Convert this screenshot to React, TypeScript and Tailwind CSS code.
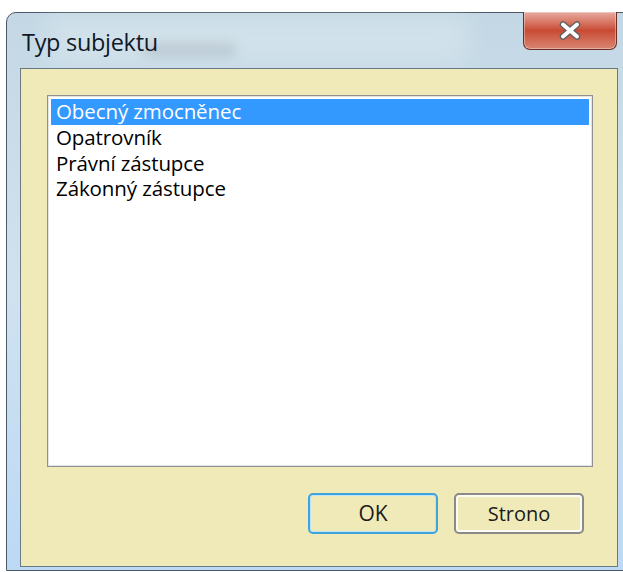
const items = ["Obecný zmocněnec", "Opatrovník", "Právní zástupce", "Zákonný zástupce"];

const uiFont = { fontFamily: '"Open Sans", "Noto Sans", "DejaVu Sans", sans-serif' };

const CloseButton = () => (
  <div className="w-[94px] h-[38px] rounded-b-[7px] border border-t-0 border-[#6b2f25] bg-gradient-to-b from-[#e6aa9f] via-[#c84a33] to-[#d88572] flex items-center justify-center shadow-[inset_0_0_0_1px_rgba(255,255,255,0.35)]">
    <svg width="24" height="19" viewBox="0 0 24 19">
      <path d="M5 3.5 L19 15.5 M19 3.5 L5 15.5" stroke="#5f5f5f" strokeWidth="6.5" strokeLinecap="round" />
      <path d="M5 3.5 L19 15.5 M19 3.5 L5 15.5" stroke="#ffffff" strokeWidth="4" strokeLinecap="round" />
    </svg>
  </div>
);

export default function App() {
  return (
    <div className="w-[623px] h-[572px] bg-white overflow-hidden pt-[12px] pl-[6px]" style={uiFont}>
      <div className="relative w-[630px] h-[559px] rounded-tl-[10px] border border-[#4d5866] bg-gradient-to-b from-[#c3d8e4] via-[#cfe2f0] to-[#bcd9f5] pl-[13px]">
        {/* blurred glass smudge behind the caption */}
        <div className="absolute left-[135px] top-[30px] w-[95px] h-[13px] rounded-full bg-[#7f8f9a] opacity-40 blur-[6px]" />
        <div className="absolute left-[40px] top-[2px] w-[420px] h-[48px] bg-white/25 blur-[14px]" />

        <div className="relative flex items-start h-[55px]">
          <div className="pt-[15px] pl-[2px] text-[23.5px] leading-[28px] text-[#101828] tracking-[-0.3px]">Typ subjektu</div>
          <div className="ml-auto mr-[18px] -mt-px">
            <CloseButton />
          </div>
        </div>

        <div className="relative w-[598px] h-[499px] border border-[#6a7785] bg-[#efeab8] flex flex-col pl-[26px] pt-[26px] pr-[33px]">
          <div className="w-[546px] h-[372px] border border-[#8e9096] shadow-[inset_0_0_0_1px_#e3e3e3] bg-white p-[3px] text-[20.5px] leading-[25.5px] text-black">
            {items.map((item, i) => (
              <div
                key={item}
                className={i === 0 ? "bg-[#3399ff] text-white pl-[5px] h-[26px] tracking-[-0.1px]" : "pl-[5px] h-[25.5px] tracking-[-0.1px]"}
              >
                {item}
              </div>
            ))}
          </div>

          <div className="flex justify-end gap-[16px] mt-[26px]">
            <button className="w-[130px] h-[41px] rounded-[5px] border-2 border-[#3fa3dc] bg-[#efeab8] shadow-[inset_0_0_0_1px_#bfe3f7] text-[21px] text-[#1b1b1b]">
              OK
            </button>
            <button className="w-[130px] h-[41px] rounded-[5px] border-2 border-[#8a8a8a] bg-[#efeab8] shadow-[inset_0_0_0_2px_#fbfbf3] text-[20px] text-[#1b1b1b]">
              Strono
            </button>
          </div>
        </div>
      </div>
    </div>
  );
}
